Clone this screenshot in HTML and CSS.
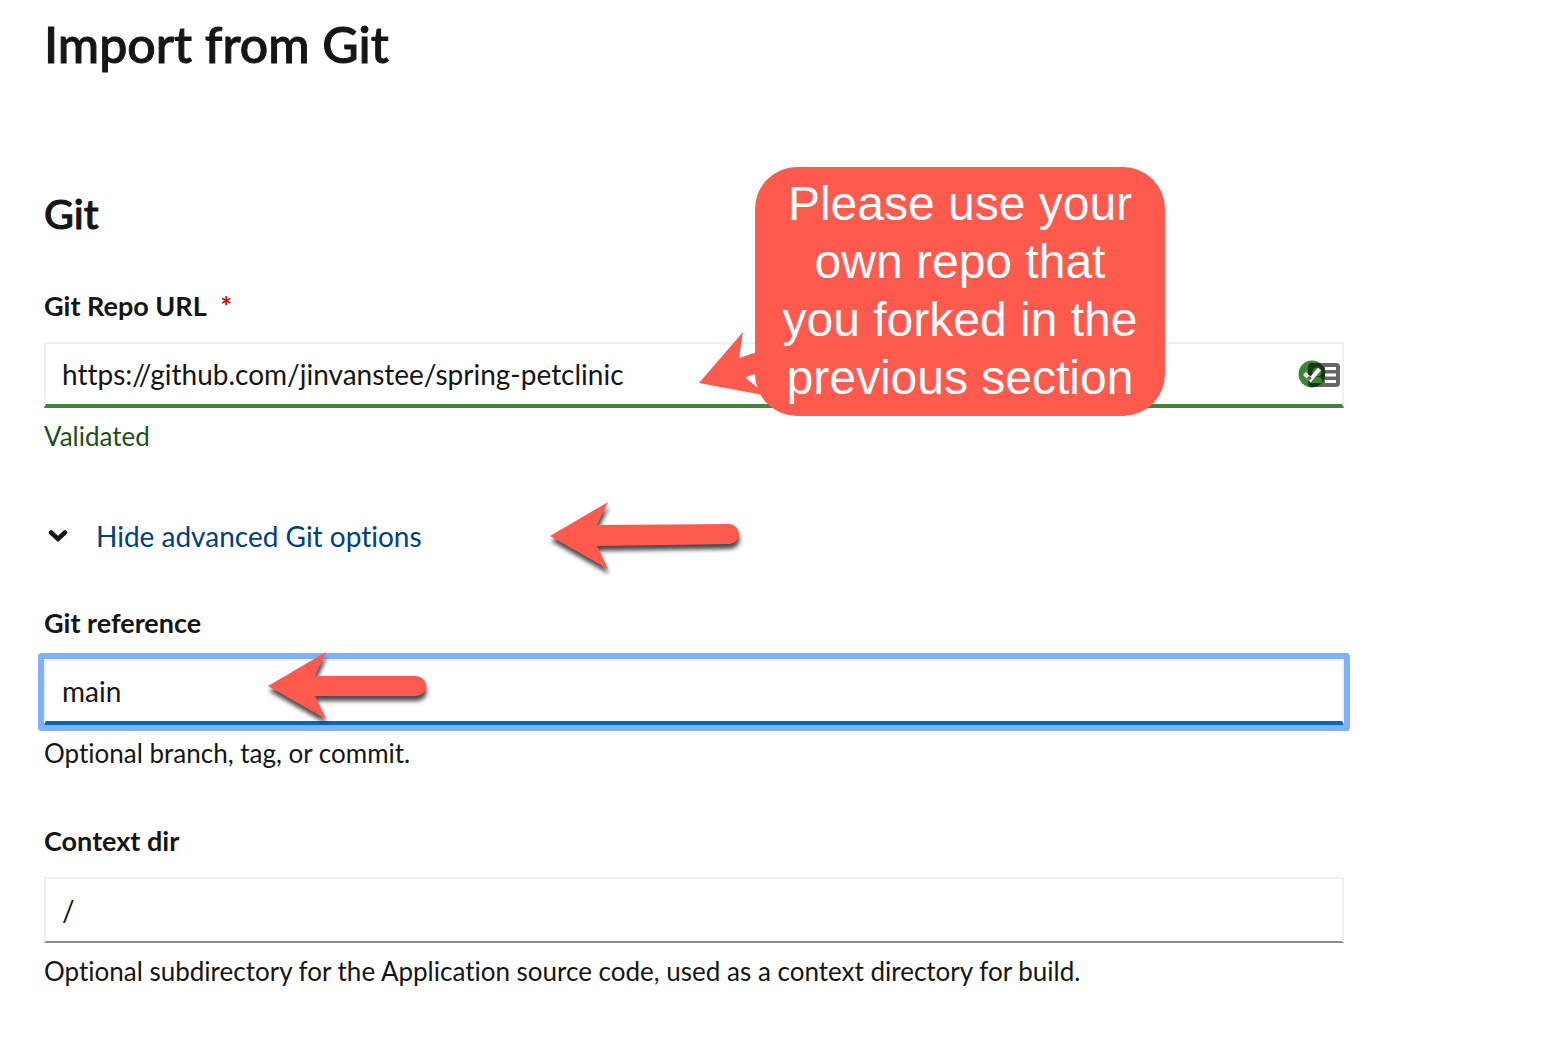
FILE: index.html
```html
<!DOCTYPE html>
<html lang="en">
<head>
<meta charset="utf-8">
<meta name="viewport" content="width=device-width, initial-scale=1">
<title>Import from Git</title>
<link rel="stylesheet" href="styles.css">
</head>
<body>
<main class="page">
  <h1 class="page-title">Import from Git</h1>
  <form class="form">
    <h2 class="section-title">Git</h2>

    <div class="field">
      <label class="label" for="repo-url">Git Repo URL <span class="required">*</span></label>
      <div class="control">
        <input class="input input-success" id="repo-url" type="text" value="https://github.com/jinvanstee/spring-petclinic" required>
        <svg class="status" viewBox="0 0 42 28" aria-hidden="true">
          <circle cx="14" cy="14" r="13.500" fill="#3e8635"/>
          <path d="M14 3H38a4 4 0 0 1 4 4V23a4 4 0 0 1-4 4H14a4 4 0 0 1-4-4V7a4 4 0 0 1 4-4z" fill="#000" fill-opacity=".6"/>
          <path d="M27 8.500h11M27 15h11M27 21.500h11" stroke="#fff" stroke-width="3"/>
          <path d="M12 23v-2q0-4 4-4h4q4 0 4 4v2z" fill="#3e8635"/>
          <circle cx="19" cy="12" r="4.500" fill="#3e8635"/>
          <path d="M6.500 13.500l6 6L21.500 9" fill="none" stroke="#fff" stroke-width="4"/>
          <path d="M10 17l2.500 2.500" fill="none" stroke="#666" stroke-width="3.500"/>
        </svg>
      </div>
      <p class="helper helper-success">Validated</p>
    </div>

    <button class="toggle" type="button" aria-expanded="true">
      <svg class="chevron" viewBox="0 0 28 28" aria-hidden="true"><path d="M7 10.500l7 6.500 7-6.500" fill="none" stroke="#151515" stroke-width="4.500" stroke-linecap="round"/></svg>
      <span>Hide advanced Git options</span>
    </button>

    <div class="field">
      <label class="label" for="git-ref">Git reference</label>
      <div class="control">
        <input class="input input-active" id="git-ref" type="text" value="main">
      </div>
      <p class="helper">Optional branch, tag, or commit.</p>
    </div>

    <div class="field">
      <label class="label" for="context-dir">Context dir</label>
      <div class="control">
        <input class="input" id="context-dir" type="text" value="/">
      </div>
      <p class="helper">Optional subdirectory for the Application source code, used as a context directory for build.</p>
    </div>
  </form>

  <svg class="pointer" viewBox="0 0 70 70" aria-hidden="true"><path d="M0 53L44 2 40 28 70 18V40L47 48 59 58 64 65Z" fill="#ff5a4d"/><path d="M47 47l9-3 2 13z" fill="#fff"/></svg>
  <p class="callout">Please use your own repo that you forked in the previous section</p>
  <svg class="arrow arrow-toggle" viewBox="0 0 192 70" aria-hidden="true"><path d="M0 35L58 1 47 24 179 23A10 10 0 0 1 179 43L47 45 58 68Z" fill="#ff5a4d"/></svg>
  <svg class="arrow arrow-ref" viewBox="0 0 160 70" aria-hidden="true"><path d="M0 35L58 1 47 25H148A10 10 0 0 1 148 45H47L58 68Z" fill="#ff5a4d"/></svg>
</main>
</body>
</html>
```
FILE: styles.css
```css
* { box-sizing: border-box; }

body {
  margin: 0;
  background: #fff;
  color: #151515;
  font-family: Lato, sans-serif;
  font-variant-ligatures: none;
}

h1, h2, p { margin: 0; }

.page {
  position: relative;
  padding: 14px 44px 48px;
}

.page-title {
  font-size: 50px;
  line-height: 60px;
  font-weight: 500;
  -webkit-text-stroke: 1px currentColor;
}

.form {
  display: flex;
  flex-direction: column;
  gap: 48px;
  max-width: 1300px;
  margin-top: 116px;
}

.section-title {
  font-size: 41px;
  line-height: 48px;
  font-weight: 500;
  -webkit-text-stroke: 1px currentColor;
}

.field { display: flex; flex-direction: column; }

.label {
  margin-bottom: 16px;
  font-size: 27px;
  line-height: 40px;
  font-weight: 700;
}

.required { margin-left: 8px; color: #c9190b; font-weight: 900; }

.control { position: relative; display: flex; }

.input {
  width: 100%;
  height: 66px;
  padding: 0 16px;
  border: 2px solid #f0f0f0;
  border-bottom-color: #8a8d90;
  border-radius: 0;
  outline: 0;
  background: #fff;
  color: inherit;
  font: 28px/40px Lato, sans-serif;
  font-variant-ligatures: none;
}

.input-success { padding-right: 64px; border-bottom: 4px solid #3e8635; }

.input-active {
  border-bottom: 4px solid #06c;
  box-shadow: 0 0 0 6px #7fb2fa;
  border-radius: 1px;
}

.status {
  position: absolute;
  top: 18px;
  right: 4px;
  width: 42px;
  height: 28px;
}

.helper { margin-top: 8px; font-size: 26px; line-height: 40px; }
.helper-success { color: #1e4f18; }

.toggle {
  display: flex;
  align-items: center;
  align-self: flex-start;
  gap: 24px;
  margin: 12px 0 -1px;
  padding: 0;
  border: 0;
  background: none;
  color: #004080;
  font: 28px/40px Lato, sans-serif;
  font-variant-ligatures: none;
}

.chevron { width: 28px; height: 28px; }

/* Annotations laid over the form */
.callout {
  position: absolute;
  top: 167px;
  left: 755px;
  width: 410px;
  padding: 8px 24px 9px;
  border-radius: 42px;
  background: #ff5a4d;
  color: #fff;
  font: 48px/58px "Liberation Sans", Arial, sans-serif;
  text-align: center;
}

.pointer { position: absolute; top: 330px; left: 699px; width: 70px; height: 70px; }

.arrow { position: absolute; height: 70px; overflow: visible; filter: drop-shadow(1px 5px 2px rgba(0, 0, 0, .7)); }
.arrow-toggle { top: 501px; left: 550px; width: 192px; }
.arrow-ref { top: 651px; left: 268px; width: 160px; }
```
